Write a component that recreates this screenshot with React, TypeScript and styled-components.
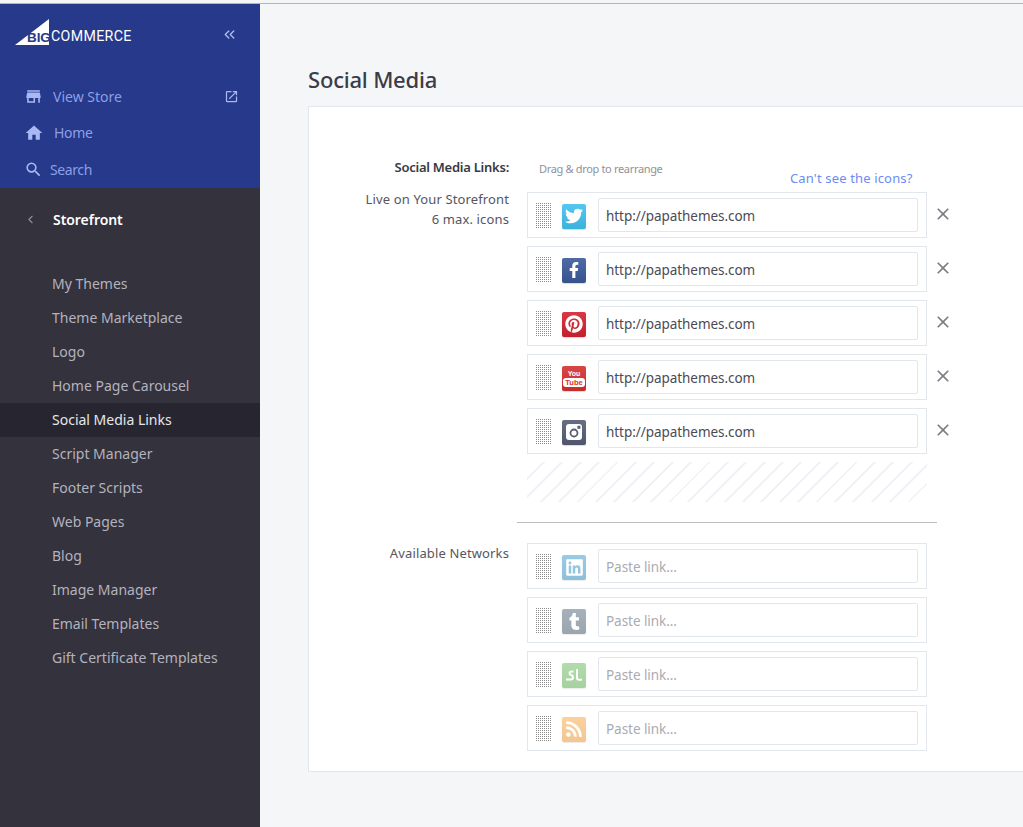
import React from "react";
import styled, { createGlobalStyle } from "styled-components";
import { MdStore, MdHome, MdSearch, MdOpenInNew, MdClose } from "react-icons/md";
import { FaTwitter, FaFacebookF, FaPinterest, FaLinkedin, FaTumblr, FaRss } from "react-icons/fa";
import { ChevronsLeft, ChevronLeft } from "lucide-react";

const Global = createGlobalStyle`
  html, body { margin: 0; padding: 0; height: 100%; overflow: hidden; }
  body { background: #f5f6f8; font-family: "Noto Sans", "Open Sans", sans-serif; }
  * { box-sizing: border-box; }
`;

const Shell = styled.div`
  display: flex;
  width: 1023px;
  height: 824px;
  margin-top: 3px;
  border-top: 1px solid #b4b4b4;
  overflow: hidden;
`;

const Sidebar = styled.aside`
  width: 260px;
  flex: none;
  background: #33323d;
  display: flex;
  flex-direction: column;
`;

const BlueTop = styled.div`
  background: #26398a;
  height: 184px;
  padding: 11px 22px 0 15px;
`;

const LogoRow = styled.div`
  display: flex;
  justify-content: space-between;
  align-items: center;
  height: 30px;
  margin-bottom: 33px;
  color: #a9b8f2;
`;

const Logo = styled.div`
  position: relative;
  width: 120px;
  height: 28px;
`;

const LogoMark = styled.svg`
  position: absolute;
  left: 0;
  top: 3px;
`;

const LogoBig = styled.span`
  position: absolute;
  left: 12px;
  top: 14px;
  font: 700 13.5px/15px "Liberation Sans", sans-serif;
  color: #26398a;
  letter-spacing: -0.1px;
`;

const LogoCommerce = styled.span`
  position: absolute;
  left: 36px;
  top: 13px;
  font: 400 14.2px/15px "Roboto", sans-serif;
  color: #fff;
  letter-spacing: 0.35px;
`;

const Collapse = styled.span`
  display: flex;
  padding-top: 8px;
`;

const BlueItem = styled.div<{ $gap: number; $spacing: number }>`
  display: flex;
  align-items: center;
  height: 36.5px;
  padding-left: 9px;
  gap: ${(p) => p.$gap}px;
  color: #8c9fe6;
  font-size: 14px;
  letter-spacing: ${(p) => p.$spacing}px;
  svg { flex: none; color: #a9b8f2; }
`;

const EndIcon = styled.span`
  margin-left: auto;
  display: flex;
  margin-right: -1px;
`;

const SectionHead = styled.div`
  display: flex;
  align-items: center;
  height: 62px;
  padding-left: 24px;
  gap: 16px;
  color: #fff;
  font-size: 14px;
  font-weight: 600;
  letter-spacing: -0.05px;
  svg { color: #8f8e99; }
`;

const NavList = styled.nav`
  margin-top: 17px;
`;

const NavItem = styled.div<{ $active?: boolean }>`
  height: 34px;
  line-height: 34px;
  padding-left: 52px;
  font-size: 14px;
  letter-spacing: 0;
  color: ${(p) => (p.$active ? "#e6e6ea" : "#b4b3bd")};
  background: ${(p) => (p.$active ? "#272630" : "transparent")};
`;

const Main = styled.main`
  flex: 1;
  padding-left: 48px;
  min-width: 0;
`;

const Title = styled.h1`
  margin: 0;
  padding-top: 57px;
  height: 102px;
  font-size: 22px;
  line-height: 36px;
  font-weight: 500;
  color: #3b3c49;
  letter-spacing: -0.2px;
`;

const Card = styled.section`
  width: 760px;
  height: 666px;
  background: #fff;
  border: 1px solid #e3e6ec;
  padding-top: 50px;
  display: grid;
  grid-template-columns: 200px 1fr;
  column-gap: 18px;
  align-content: start;
`;

const Labels = styled.div`
  text-align: right;
  font-size: 13px;
  line-height: 20px;
  color: #555660;
  letter-spacing: 0.13px;
`;

const BoldLabel = styled.div`
  font-weight: 600;
  color: #383944;
  margin-bottom: 12px;
  letter-spacing: -0.25px;
`;

const Hint = styled.div`
  position: relative;
  height: 35px;
  padding: 2px 0 0 12px;
  font-size: 11px;
  line-height: 20px;
  color: #8f919c;
  letter-spacing: -0.33px;
`;

const HelpLink = styled.a`
  position: absolute;
  left: 263px;
  top: 11px;
  font-size: 13px;
  color: #6b8cf5;
  letter-spacing: 0.15px;
  white-space: nowrap;
`;

const Row = styled.div`
  position: relative;
  width: 400px;
  height: 46px;
  margin-bottom: 8px;
  border: 1px solid #e2e7ee;
  display: flex;
  align-items: center;
  padding: 0 8px;
`;

const Grip = styled.div`
  width: 16px;
  height: 26px;
  flex: none;
  background-image: radial-gradient(circle at 0.5px 0.5px, #8c8c8c 0.7px, transparent 0.8px);
  background-size: 2px 2px;
  margin: 2px 10px 0 0;
`;

const Badge = styled.div<{ $bg: string; $dim?: boolean }>`
  width: 24px;
  height: 25px;
  flex: none;
  border-radius: 2px;
  background: linear-gradient(rgba(255, 255, 255, 0.1), rgba(0, 0, 0, 0.08)), ${(p) => p.$bg};
  opacity: ${(p) => (p.$dim ? 0.5 : 1)};
  color: #fff;
  display: flex;
  flex-direction: column;
  align-items: center;
  justify-content: center;
  margin: 2px 12px 0 0;
  box-shadow: 0 1px 1px rgba(0, 0, 0, 0.15);
`;

const TubeTop = styled.span`
  font: 700 7px/8px "Liberation Sans", sans-serif;
`;

const TubeBottom = styled.span`
  font: 700 7.5px/9px "Liberation Sans", sans-serif;
  background: #fff;
  color: #d43131;
  border-radius: 3px;
  padding: 0 2px;
`;

const LinkInput = styled.div<{ $empty?: boolean }>`
  width: 320px;
  height: 34px;
  border: 1px solid #e2e7ee;
  border-radius: 2px;
  padding-left: 7px;
  font-size: 13.5px;
  line-height: 34px;
  letter-spacing: -0.05px;
  color: ${(p) => (p.$empty ? "#a9abb3" : "#4a4b55")};
`;

const Remove = styled.span`
  position: absolute;
  left: 405px;
  top: 11px;
  display: flex;
  color: #7b7e85;
`;

const DropZone = styled.div`
  width: 400px;
  height: 40px;
  background: repeating-linear-gradient(135deg, #fff 0 11px, #f1f2f5 11px 13px);
`;

const Divider = styled.hr`
  grid-column: 1 / -1;
  width: 420px;
  margin: 20px 0 20px 208px;
  border: 0;
  border-top: 1px solid #bdbdbd;
`;

const InstagramGlyph = () => (
  <svg width="18" height="18" viewBox="0 0 18 18">
    <rect x="1" y="1" width="16" height="16" rx="3" fill="#fff" />
    <circle cx="9" cy="10" r="4.4" fill="#565d74" />
    <circle cx="9" cy="10" r="2.6" fill="#fff" />
    <rect x="12.4" y="2.8" width="3" height="3" fill="#565d74" />
  </svg>
);

const StumbleGlyph = () => (
  <svg width="18" height="16" viewBox="0 0 18 16" fill="none" stroke="#fff" strokeWidth="2">
    <path d="M1 12.5h5c2.600 0 2.600-4 0-4.400C4 7.700 4 4.500 6.500 4.500h2" />
    <path d="M12 2v8.500c0 2.500 1.500 2.500 5 2" />
  </svg>
);

type Net = { icon: React.ReactNode; bg: string };

const live: Net[] = [
  { icon: <FaTwitter size={18} />, bg: "#40c1ee" },
  { icon: <FaFacebookF size={16} />, bg: "#3b5a9a" },
  { icon: <FaPinterest size={18} />, bg: "#d3222f" },
  {
    icon: (
      <>
        <TubeTop>You</TubeTop>
        <TubeBottom>Tube</TubeBottom>
      </>
    ),
    bg: "#d43131",
  },
  { icon: <InstagramGlyph />, bg: "#565d74" },
];

const available: Net[] = [
  { icon: <FaLinkedin size={19} />, bg: "#1f8fc4" },
  { icon: <FaTumblr size={17} />, bg: "#3d5469" },
  { icon: <StumbleGlyph />, bg: "#58b14a" },
  { icon: <FaRss size={18} />, bg: "#fb9a28" },
];

const navItems = [
  "My Themes",
  "Theme Marketplace",
  "Logo",
  "Home Page Carousel",
  "Social Media Links",
  "Script Manager",
  "Footer Scripts",
  "Web Pages",
  "Blog",
  "Image Manager",
  "Email Templates",
  "Gift Certificate Templates",
];

export default function App() {
  return (
    <>
      <Global />
      <Shell>
        <Sidebar>
          <BlueTop>
            <LogoRow>
              <Logo>
                <LogoMark width="34" height="26" viewBox="0 0 34 26">
                  <polygon points="0,26 34,0 34,26" fill="#fff" />
                </LogoMark>
                <LogoBig>BIG</LogoBig>
                <LogoCommerce>COMMERCE</LogoCommerce>
              </Logo>
              <Collapse>
                <ChevronsLeft size={17} />
              </Collapse>
            </LogoRow>
            <BlueItem $gap={10} $spacing={0}>
              <MdStore size={19} />
              View Store
              <EndIcon>
                <MdOpenInNew size={15} />
              </EndIcon>
            </BlueItem>
            <BlueItem $gap={10} $spacing={-0.3}>
              <MdHome size={20} />
              Home
            </BlueItem>
            <BlueItem $gap={7} $spacing={-0.4}>
              <MdSearch size={19} />
              Search
            </BlueItem>
          </BlueTop>
          <SectionHead>
            <ChevronLeft size={13} />
            Storefront
          </SectionHead>
          <NavList>
            {navItems.map((n) => (
              <NavItem key={n} $active={n === "Social Media Links"}>
                {n}
              </NavItem>
            ))}
          </NavList>
        </Sidebar>
        <Main>
          <Title>Social Media</Title>
          <Card>
            <Labels>
              <BoldLabel>Social Media Links:</BoldLabel>
              Live on Your Storefront
              <br />6 max. icons
            </Labels>
            <div>
              <Hint>
                Drag &amp; drop to rearrange
                <HelpLink>Can't see the icons?</HelpLink>
              </Hint>
              {live.map((n, i) => (
                <Row key={i}>
                  <Grip />
                  <Badge $bg={n.bg}>{n.icon}</Badge>
                  <LinkInput>http://papathemes.com</LinkInput>
                  <Remove>
                    <MdClose size={20} />
                  </Remove>
                </Row>
              ))}
              <DropZone />
            </div>
            <Divider />
            <Labels>Available Networks</Labels>
            <div>
              {available.map((n, i) => (
                <Row key={i}>
                  <Grip />
                  <Badge $bg={n.bg} $dim>
                    {n.icon}
                  </Badge>
                  <LinkInput $empty>Paste link...</LinkInput>
                </Row>
              ))}
            </div>
          </Card>
        </Main>
      </Shell>
    </>
  );
}
